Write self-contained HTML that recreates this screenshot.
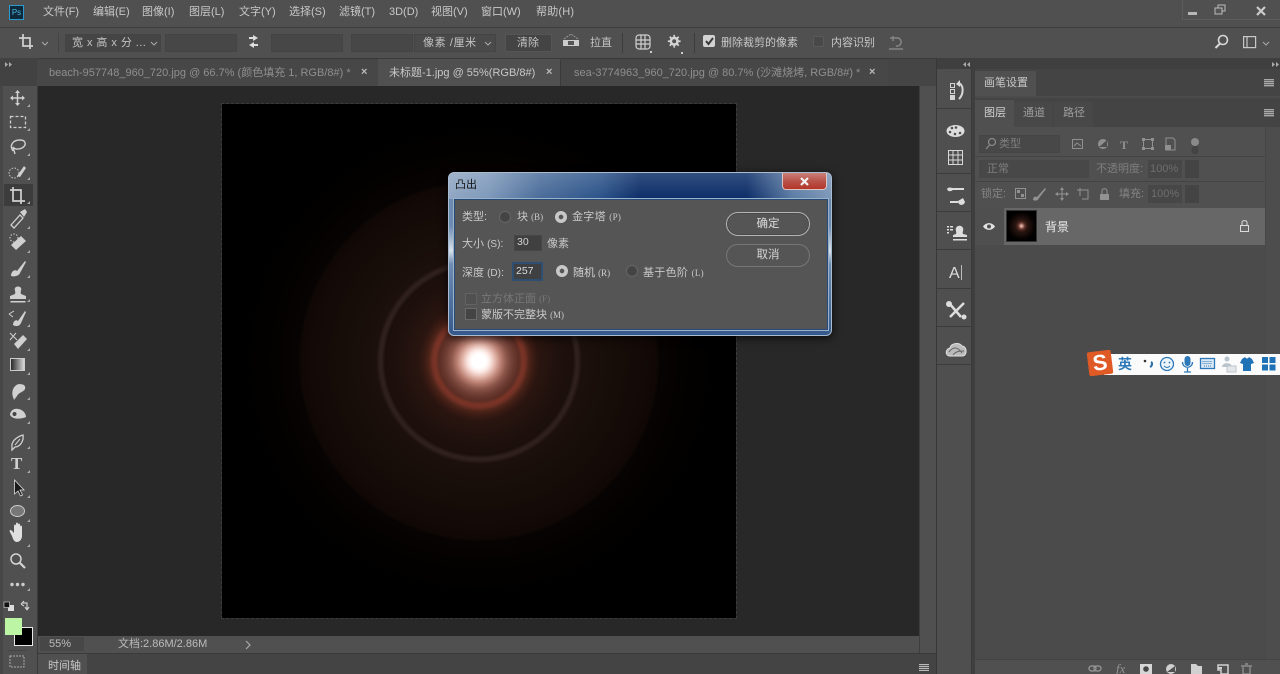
<!DOCTYPE html>
<html><head><meta charset="utf-8">
<style>
html,body{margin:0;padding:0;width:1280px;height:674px;overflow:hidden;background:#505050}
body{position:relative;font-family:"Liberation Sans","Noto Sans CJK SC",sans-serif;color:#c4c4c4;font-size:11px}
#w{position:absolute;left:0;top:0;width:1280px;height:674px;overflow:hidden;filter:blur(.35px)}
.a{position:absolute;white-space:nowrap}
.f{position:absolute;background:#474747;border:1px solid #444;box-sizing:border-box}
svg{position:absolute;overflow:visible}
.m{top:5px;font-size:11px;color:#c8c8c8;line-height:14px}
.t{top:66px;line-height:14px;font-size:11px;color:#8f8f8f}
.x{top:65px;font-size:11px;font-weight:bold;color:#bbb;line-height:14px}
.d{font-size:11px;color:#c9c9c9;line-height:14px}
.s{font-size:9px;font-family:"Liberation Serif",serif}
.rd{position:absolute;width:12px;height:12px;border-radius:50%;box-sizing:border-box}
.on{background:radial-gradient(circle,#555 0 2px,#c8c8c8 2.6px)}
.off{background:#444;border:1px solid #666}
.sep{position:absolute;background:#3c3c3c}
</style></head><body><div id="w">

<!-- menu -->
<div class="a" style="left:0;top:0;width:1280px;height:27px;background:#505050;border-bottom:1px solid #3e3e3e"></div>
<div class="a" style="left:9px;top:5px;width:13px;height:13px;background:#0e2a3a;border:1px solid #2c9ad0;color:#4db8e8;font-size:8px;line-height:13px;text-align:center">Ps</div>
<div class="a m" style="left:43px">文件(F)</div>
<div class="a m" style="left:93px">编辑(E)</div>
<div class="a m" style="left:142px">图像(I)</div>
<div class="a m" style="left:189px">图层(L)</div>
<div class="a m" style="left:239px">文字(Y)</div>
<div class="a m" style="left:289px">选择(S)</div>
<div class="a m" style="left:339px">滤镜(T)</div>
<div class="a m" style="left:389px">3D(D)</div>
<div class="a m" style="left:431px">视图(V)</div>
<div class="a m" style="left:481px">窗口(W)</div>
<div class="a m" style="left:536px;letter-spacing:.2px">帮助(H)</div>
<div class="a" style="left:1182px;top:0;width:98px;height:20px;border:1px solid #5c5c5c;border-top:0;border-right:0;box-sizing:border-box"></div>
<div class="a" style="left:1188px;top:12px;width:9px;height:3px;background:#b8b8b8"></div>
<svg style="left:1214px;top:4px" width="14" height="12"><rect x="4" y="1" width="7" height="6" fill="none" stroke="#bbb"/><rect x="1" y="4" width="7" height="6" fill="#555" stroke="#bbb"/></svg>
<svg style="left:1256px;top:6px" width="11" height="10"><path d="M1 1L9 9M9 1L1 9" stroke="#ccc" stroke-width="2.200"/></svg>

<!-- options -->
<div class="a" style="left:0;top:28px;width:1280px;height:30px;background:#505050;border-bottom:1px solid #3c3c3c"></div>
<svg style="left:18px;top:34px" width="20" height="18" fill="none" stroke="#d0d0d0" stroke-width="1.700"><path d="M5 0V12H15M1 4H12V15"/></svg>
<svg style="left:41px;top:41px" width="9" height="6" fill="none" stroke="#aaa"><path d="M1 1L4 4L7 1"/></svg>
<div class="sep" style="left:58px;top:33px;width:1px;height:20px;background:#444"></div>
<div class="f" style="left:65px;top:34px;width:96px;height:18px;background:#454545"></div>
<div class="a" style="left:72px;top:36px;font-size:11px;line-height:14px;color:#c4c4c4;letter-spacing:.45px">宽 x 高 x 分 ...</div>
<svg style="left:150px;top:41px" width="9" height="6" fill="none" stroke="#aaa"><path d="M1 1L4 4L7 1"/></svg>
<div class="f" style="left:165px;top:34px;width:72px;height:18px"></div>
<svg style="left:246px;top:35px" width="16" height="14" fill="#ddd"><path d="M7 0L12 3L7 6V4H3V2H7ZM8 7L3 10L8 13V11H12V9H8Z"/></svg>
<div class="f" style="left:271px;top:34px;width:72px;height:18px"></div>
<div class="f" style="left:351px;top:34px;width:62px;height:18px"></div>
<div class="f" style="left:414px;top:34px;width:82px;height:18px;background:#4a4a4a"></div>
<div class="a" style="left:423px;top:36px;font-size:11px;line-height:14px;color:#c4c4c4;letter-spacing:.6px">像素 /厘米</div>
<svg style="left:484px;top:41px" width="9" height="6" fill="none" stroke="#aaa"><path d="M1 1L4 4L7 1"/></svg>
<div class="f" style="left:505px;top:34px;width:47px;height:18px;background:#444;border-color:#555"></div>
<div class="a" style="left:517px;top:36px;font-size:11px;line-height:14px;color:#c4c4c4">清除</div>
<svg style="left:562px;top:33px" width="18" height="15"><path d="M2 6L9 1L16 6" fill="none" stroke="#999" stroke-dasharray="2 1"/><rect x="1" y="7" width="16" height="6" fill="#ccc"/><rect x="6" y="8" width="6" height="4" fill="#555"/></svg>
<div class="a" style="left:590px;top:36px;font-size:11px;line-height:14px;color:#c4c4c4">拉直</div>
<div class="sep" style="left:622px;top:33px;width:1px;height:20px"></div>
<svg style="left:635px;top:34px" width="18" height="19" fill="none" stroke="#d0d0d0" stroke-width="1.200"><rect x="1" y="1" width="14" height="14" rx="3"/><path d="M1 6H15M1 10H15M6 1V15M10 1V15"/><rect x="15" y="17" width="2" height="2" fill="#ccc" stroke="none"/></svg>
<svg style="left:667px;top:34px" width="18" height="20"><path d="M7.500 1H9.500V3.200L11.500 4L13 2.500L14.500 4L13 5.500L13.800 7.500H16V9.500H13.800L13 11.500L14.500 13L13 14.500L11.500 13L9.500 13.800V16H7.500V13.800L5.500 13L4 14.500L2.500 13L4 11.500L3.200 9.500H1V7.500H3.200L4 5.500L2.500 4L4 2.500L5.500 4L7.500 3.200Z" transform="scale(.85)" fill="#d4d4d4"/><circle cx="7.200" cy="7.200" r="2" fill="#505050"/><rect x="14" y="18" width="2" height="2" fill="#ccc"/></svg>
<div class="sep" style="left:694px;top:33px;width:1px;height:20px"></div>
<div class="a" style="left:703px;top:35px;width:12px;height:12px;background:#d2d2d2;border-radius:2px"></div>
<svg style="left:704px;top:36px" width="11" height="10" fill="none" stroke="#3a3a3a" stroke-width="2"><path d="M2 5L4.500 8L9 2"/></svg>
<div class="a" style="left:721px;top:36px;font-size:11px;line-height:14px;color:#c8c8c8">删除裁剪的像素</div>
<div class="a" style="left:813px;top:36px;width:11px;height:11px;background:#484848;border:1px solid #5a5a5a;box-sizing:border-box;border-radius:2px"></div>
<div class="a" style="left:831px;top:36px;font-size:11px;line-height:14px;color:#c8c8c8">内容识别</div>
<svg style="left:888px;top:35px" width="17" height="15" fill="none" stroke="#858585" stroke-width="1.500"><path d="M5 3H10A4 4 0 1 1 8 11M5 1V6M5 3L2 3M1 14H15"/></svg>
<svg style="left:1214px;top:34px" width="16" height="16" fill="none" stroke="#d8d8d8" stroke-width="1.600"><circle cx="9" cy="6" r="4.500"/><path d="M6 9.500L1.500 14" stroke-width="2"/></svg>
<svg style="left:1243px;top:36px" width="14" height="13" fill="none" stroke="#c8c8c8" stroke-width="1.200"><rect x=".6" y=".6" width="12" height="11"/><path d="M4 1V12"/></svg>
<svg style="left:1262px;top:41px" width="9" height="6" fill="none" stroke="#aaa"><path d="M1 1L4 4L7 1"/></svg>

<!-- tab bar -->
<div class="a" style="left:0;top:58px;width:937px;height:28px;background:#454545;border-top:1px solid #3a3a3a;box-sizing:border-box"></div>
<div class="a" style="left:0;top:58px;width:38px;height:28px;background:#424242"></div>
<svg style="left:5px;top:61px" width="10" height="8" fill="#aaa"><path d="M0 1V6L3 3.500ZM4 1V6L7 3.500Z"/></svg>
<div class="a" style="left:37px;top:60px;width:341px;height:26px;background:#474747;border-right:1px solid #3a3a3a"></div>
<div class="a" style="left:378px;top:59px;width:182px;height:27px;background:#505050"></div>
<div class="a" style="left:560px;top:60px;width:327px;height:26px;background:#474747;border-left:1px solid #3a3a3a"></div>
<div class="a t" style="left:49px">beach-957748_960_720.jpg @ 66.7% (颜色填充 1, RGB/8#) *</div>
<div class="a x" style="left:361px">×</div>
<div class="a t" style="left:389px;color:#c8c8c8">未标题-1.jpg @ 55%(RGB/8#)</div>
<div class="a x" style="left:546px">×</div>
<div class="a t" style="left:574px">sea-3774963_960_720.jpg @ 80.7% (沙滩烧烤, RGB/8#) *</div>
<div class="a x" style="left:869px">×</div>

<!-- canvas -->
<div class="a" style="left:38px;top:86px;width:881px;height:550px;background:#282828"></div>
<div class="a" style="left:222px;top:104px;width:514px;height:514px;background:#000;overflow:hidden;outline:1px dashed #3c3c3c">
<div class="a" style="left:0;top:0;width:514px;height:514px;background:
radial-gradient(circle at 257px 257px,#fff 0,#fff 7px,#fbeae6 11px,#e5b9ae 16px,#b97f72 22px,#8a5449 28px,#6d3c32 34px,#5b2d24 40px,#7c3426 44px,#6e3024 47px,#4e2419 50px,#3c1c14 54px,#2a1510 60px,#1f110d 80px,#1b0f0c 94px,#2d1f1b 97px,#30211d 99px,#1c100c 103px,#170d09 130px,#130a07 165px,#100805 177px,#070302 181px,#020100 215px,#000 250px)"></div>
</div>

<!-- left toolbar -->
<div class="a" style="left:0;top:86px;width:37px;height:588px;background:#505050;border-right:1px solid #3a3a3a"></div>
<div class="a" style="left:0;top:86px;width:3px;height:588px;background:#464646"></div>
<div class="a" style="left:4px;top:184px;width:29px;height:22px;background:#3c3c3c"></div>
<svg style="left:0;top:86px" width="37" height="590">
<defs><linearGradient id="g"><stop offset="0" stop-color="#222"/><stop offset="1" stop-color="#ddd"/></linearGradient></defs>
<g fill="#d0d0d0" stroke="#d0d0d0">
<path d="M17.500 5V19M11 12H24" stroke-width="1.500" fill="none"/><path d="M17.500 4L15 7H20ZM17.500 20L15 17H20ZM10 12L13 9.500V14.500ZM25 12L22 9.500V14.500Z" stroke="none"/>
<rect x="10.500" y="30.500" width="15" height="11" fill="none" stroke-dasharray="3 2" stroke-width="1.300"/>
<path d="M13 65C9 59 13 54 20 54C26 54 27 59 22 62C18 64 14 63 13 61" fill="none" stroke-width="1.400"/><path d="M13 61L15 68" fill="none" stroke-width="1.400"/>
<circle cx="14" cy="87" r="5" fill="none" stroke-dasharray="1.500 1.500"/><path d="M17 90L24 80L26 82L20 91Z" stroke="none"/>
<path d="M13 101V115H25M10 104H21V118" fill="none" stroke-width="1.700"/>
<path d="M11 139L20 129L23 132L14 142Z" fill="none" stroke-width="1.300"/><path d="M20 126L25 123L27 126L24 131Z" stroke="none"/>
<path d="M11 159L21 150L26 155L16 164Z" stroke="none"/><circle cx="14" cy="152" r="4" fill="none" stroke-dasharray="1.500 1.500"/>
<path d="M11 190C11 185 15 183 17 185L25 175L26 176L20 187C19 190 14 191 11 190Z" stroke="none"/>
<path d="M10 213V210L15 208C16 205 14 204 15 202C16 200 20 200 21 202C22 204 20 205 21 208L26 210V213Z" stroke="none"/><rect x="10.500" y="215" width="15" height="1.500" stroke="none"/>
<path d="M13 239C13 235 16 233 18 235L25 225L26 226L21 237C20 240 16 241 13 239Z" stroke="none"/><path d="M9 228L14 225M9 228L13 231" fill="none"/>
<path d="M14 258L23 249L27 253L18 263Z" stroke="none"/><path d="M10 247L17 254M16 247L10 254" fill="none"/>
</g>
<rect x="10.500" y="272.500" width="14" height="12" fill="url(#g)" stroke="#ccc"/>
<g fill="#d0d0d0" stroke="#d0d0d0">
<path d="M13 311C11 305 14 299 19 298C24 298 26 300 25 303C24 306 19 306 17 310L14 314Z" stroke="none"/>
<path d="M10 329C10 325 14 322 18 323C22 323 26 327 26 331C22 333 13 334 10 329Z" stroke="none"/><circle cx="14.500" cy="328" r="2" fill="#444" stroke="none"/>
<path d="M12 361C11 356 16 351 23 349C24 355 20 361 15 361L12 364Z" fill="none" stroke-width="1.300"/><path d="M15 359L20 353" fill="none"/>
<text x="11" y="383" font-family="Liberation Serif" font-size="17" font-weight="bold" stroke="none">T</text>
</g>
<path d="M14.500 394V408L18 405L20.500 410L22.500 409L20 404H24Z" fill="#1a1a1a" stroke="#ddd" stroke-width=".8"/>
<ellipse cx="17.500" cy="425" rx="7" ry="5.500" fill="#777" stroke="#ccc"/>
<path d="M12 450C10 446 9 445 10 444C12 444 13 446 14 447V440C14 438 16 438 16 440V443V438C16 436 18 436 18 438V443V439C18 437 20 437 20 439V444V441C20 439 22 439 22 441V450C22 454 19 456 17 456C14 456 13 453 12 450Z" fill="#e0e0e0"/>
<circle cx="16" cy="473" r="5" fill="none" stroke="#d4d4d4" stroke-width="1.500"/><path d="M20 477L25 482" stroke="#d4d4d4" stroke-width="2.200"/>
<g fill="#ccc"><circle cx="12" cy="498.500" r="1.700"/><circle cx="17.500" cy="498.500" r="1.700"/><circle cx="23" cy="498.500" r="1.700"/></g>
<g fill="#aaa"><path d="M30 21V18L27 21ZM30 45V42L27 45ZM30 70V67L27 70ZM30 94V91L27 94ZM30 118V115L27 118ZM30 143V140L27 143ZM30 167V164L27 167ZM30 192V189L27 192ZM30 216V213L27 216ZM30 241V238L27 241ZM30 265V262L27 265ZM30 289V286L27 289ZM30 314V311L27 314ZM30 338V335L27 338ZM30 363V360L27 363ZM30 387V384L27 387ZM30 412V409L27 412ZM30 436V433L27 436ZM30 461V458L27 461ZM30 505V502L27 505Z"/></g>
<rect x="8" y="519" width="6" height="6" fill="#ddd"/><rect x="4" y="516" width="5.500" height="5.500" fill="#111" stroke="#ddd" stroke-width=".6"/>
<path d="M22 517H27V523M21 518L24 515M21 518L24 520M27 524L25 521M27 524L29 521" fill="none" stroke="#ccc" stroke-width="1.200"/>
<rect x="10" y="570" width="14" height="11" fill="none" stroke="#aaa" stroke-dasharray="2 1"/>
<rect x="8" y="564" width="18" height="1" fill="#444"/>
</svg>
<div class="a" style="left:14px;top:627px;width:17px;height:17px;background:#000;border:1px solid #e8e8e8"></div>
<div class="a" style="left:5px;top:618px;width:17px;height:17px;background:#bcf5a3"></div>

<!-- status -->
<div class="a" style="left:38px;top:636px;width:882px;height:16px;background:#505050"></div>
<div class="a" style="left:40px;top:637px;width:44px;height:14px;background:#474747"></div>
<div class="a" style="left:49px;top:637px;font-size:11px;line-height:14px;color:#bcbcbc">55%</div>
<div class="a" style="left:118px;top:637px;font-size:11px;line-height:14px;color:#bcbcbc">文档:2.86M/2.86M</div>
<svg style="left:245px;top:640px" width="7" height="10" fill="none" stroke="#aaa" stroke-width="1.200"><path d="M1 1L5 5L1 9"/></svg>
<!-- timeline -->
<div class="a" style="left:38px;top:653px;width:899px;height:21px;background:#444;border-top:1px solid #3a3a3a;box-sizing:border-box"></div>
<div class="a" style="left:38px;top:654px;width:49px;height:20px;background:#505050"></div>
<div class="a" style="left:48px;top:659px;font-size:11px;line-height:14px;color:#c8c8c8">时间轴</div>
<div class="a" style="left:919px;top:664px;width:10px;height:7px;background:repeating-linear-gradient(#bbb 0 1px,#555 1px 2px)"></div>
<!-- right scroll column -->
<div class="a" style="left:919px;top:86px;width:18px;height:567px;background:#505050;border-left:1px solid #3e3e3e;box-sizing:border-box"></div>
<div class="a" style="left:936px;top:58px;width:1px;height:616px;background:#383838"></div>

<!-- dock column -->
<div class="a" style="left:937px;top:58px;width:343px;height:616px;background:#4b4b4b"></div>
<div class="a" style="left:937px;top:58px;width:343px;height:11px;background:#3f3f3f"></div>
<svg style="left:900px;top:60px" width="380" height="10" fill="#aaa"><path d="M66 2V7L63 4.500ZM70 2V7L67 4.500Z"/><path d="M372 2V7L375 4.500ZM376 2V7L379 4.500Z"/></svg>
<div class="a" style="left:937px;top:69px;width:35px;height:605px;background:#4f4f4f;border-right:1px solid #3a3a3a;box-sizing:border-box"></div>
<div class="a" style="left:972px;top:69px;width:3px;height:605px;background:#3f3f3f"></div>
<div class="sep" style="left:937px;top:108px;width:35px;height:1px"></div>
<div class="sep" style="left:937px;top:173px;width:35px;height:1px"></div>
<div class="sep" style="left:937px;top:211px;width:35px;height:1px"></div>
<div class="sep" style="left:937px;top:249px;width:35px;height:1px"></div>
<div class="sep" style="left:937px;top:288px;width:35px;height:1px"></div>
<div class="sep" style="left:937px;top:326px;width:35px;height:1px"></div>
<div class="sep" style="left:937px;top:364px;width:35px;height:1px"></div>
<svg style="left:937px;top:69px" width="35" height="300">
<g fill="none" stroke="#d4d4d4"><rect x="13.500" y="14.500" width="4" height="4"/><rect x="13.500" y="20.500" width="4" height="4"/></g>
<rect x="13" y="26" width="5" height="5" fill="#d4d4d4"/>
<path d="M21 14C27 15 27 25 22 30" fill="none" stroke="#d8d8d8" stroke-width="2"/><path d="M19 15L23 11V18Z" fill="#d8d8d8"/>
<ellipse cx="18.500" cy="62" rx="9" ry="6" fill="#ddd"/><g fill="#4f4f4f"><circle cx="15" cy="59" r="1.300"/><circle cx="19" cy="58.500" r="1.300"/><circle cx="13" cy="63" r="1.300"/><circle cx="18" cy="65" r="1.300"/><circle cx="23" cy="64" r="1.300"/></g>
<g fill="none" stroke="#d8d8d8"><rect x="11.500" y="81.500" width="14" height="14"/><path d="M16 82V95M21 82V95M12 86H25M12 91H25"/></g>
<path d="M15 120H27M13 133H21" stroke="#ddd" stroke-width="2"/><path d="M10 120C11 118 14 118 17 120C14 123 11 123 10 120ZM26 129L21 132C21 137 27 137 28 133Z" fill="#ddd"/>
<g fill="#ddd"><rect x="10" y="157" width="2" height="1.500"/><rect x="10" y="160" width="2" height="1.500"/><rect x="10" y="163" width="2" height="1.500"/><rect x="13" y="157" width="3" height="1.500"/><rect x="13" y="160" width="3" height="1.500"/><path d="M18 168V166L21 165C22 163 20 161 21 159C22 156 27 156 28 159C29 161 27 163 28 165L32 166V168Z" transform="translate(-2,0)"/><rect x="16" y="170" width="14" height="1.500"/></g>
<text x="12" y="209" font-family="Liberation Sans" font-size="16" fill="#ddd">A</text><rect x="24" y="196" width="1" height="15" fill="#bbb"/>
<path d="M12 234L24 248M27 234L13 248" stroke="#ddd" stroke-width="2.500"/><circle cx="12" cy="235" r="3" fill="#ddd"/><circle cx="27" cy="248" r="2.500" fill="#ddd"/>
<path d="M13 287C8 287 8 280 13 279C14 274 22 273 25 277C30 277 31 287 25 287Z" fill="#bbb" stroke="#e0e0e0"/><path d="M12 283C16 277 21 278 25 284M16 286C19 282 23 282 27 282" stroke="#666" fill="none"/>
</svg>

<!-- brush settings -->
<div class="a" style="left:975px;top:69px;width:305px;height:27px;background:#444"></div>
<div class="a" style="left:975px;top:71px;width:61px;height:25px;background:#505050"></div>
<div class="a" style="left:984px;top:76px;font-size:11px;line-height:14px;color:#c8c8c8">画笔设置</div>
<div class="a" style="left:1264px;top:79px;width:10px;height:8px;background:repeating-linear-gradient(#a8a8a8 0 1px,#6a6a6a 1px 2px)"></div>
<!-- tabs -->
<div class="a" style="left:975px;top:98px;width:305px;height:29px;background:#444"></div>
<div class="a" style="left:975px;top:100px;width:39px;height:27px;background:#505050"></div>
<div class="a" style="left:1014px;top:102px;width:39px;height:25px;background:#484848"></div>
<div class="a" style="left:1054px;top:102px;width:39px;height:25px;background:#484848"></div>
<div class="a" style="left:984px;top:106px;font-size:11px;line-height:14px;color:#d0d0d0">图层</div>
<div class="a" style="left:1023px;top:106px;font-size:11px;line-height:14px;color:#9d9d9d">通道</div>
<div class="a" style="left:1063px;top:106px;font-size:11px;line-height:14px;color:#9d9d9d">路径</div>
<div class="a" style="left:1264px;top:109px;width:10px;height:8px;background:repeating-linear-gradient(#a8a8a8 0 1px,#6a6a6a 1px 2px)"></div>

<!-- filter rows -->
<div class="a" style="left:975px;top:127px;width:305px;height:81px;background:#505050"></div>
<div class="a" style="left:975px;top:156px;width:290px;height:1px;background:#444"></div>
<div class="a" style="left:975px;top:181px;width:290px;height:1px;background:#444"></div>
<div class="a" style="left:979px;top:135px;width:81px;height:18px;background:#484848;border:1px solid #454545;box-sizing:border-box"></div>
<svg style="left:985px;top:137px" width="12" height="13" fill="none" stroke="#888" stroke-width="1.300"><circle cx="7" cy="5" r="3.500"/><path d="M4.500 8L1 12"/></svg>
<div class="a" style="left:999px;top:137px;font-size:11px;line-height:14px;color:#7e7e7e">类型</div>
<svg style="left:1072px;top:136px" width="132" height="18">
<g fill="none" stroke="#909090"><rect x=".5" y="3.500" width="10" height="9"/></g><path d="M2 10L5 7L9 10" stroke="#909090" fill="none"/>
<circle cx="31" cy="8" r="5" fill="#909090"/><path d="M27 11L35 4V11Z" fill="#505050"/>
<text x="48" y="13" font-family="Liberation Serif" font-weight="bold" font-size="12" fill="#909090">T</text>
<rect x="71.500" y="3.500" width="9" height="9" fill="none" stroke="#909090"/><g fill="#909090"><rect x="70" y="2" width="3" height="3"/><rect x="79" y="2" width="3" height="3"/><rect x="70" y="11" width="3" height="3"/><rect x="79" y="11" width="3" height="3"/></g>
<path d="M94 8V2H101L103 4V14H94Z" fill="none" stroke="#909090"/><rect x="93" y="9" width="6" height="5" fill="#909090"/>
<circle cx="123" cy="6" r="4" fill="#8a8a8a"/><rect x="119.500" y="10" width="7" height="8" rx="3" fill="#444"/>
</svg>
<div class="a" style="left:979px;top:160px;width:110px;height:18px;background:#484848"></div>
<div class="a" style="left:987px;top:162px;font-size:11px;line-height:14px;color:#7e7e7e">正常</div>
<div class="a" style="left:1096px;top:162px;font-size:11px;line-height:14px;color:#7e7e7e">不透明度:</div>
<div class="a" style="left:1148px;top:160px;width:34px;height:18px;background:#474747"></div>
<div class="a" style="left:1150px;top:162px;font-size:11px;line-height:14px;color:#6e6e6e">100%</div>
<div class="a" style="left:1185px;top:160px;width:14px;height:18px;background:#444"></div>
<div class="a" style="left:981px;top:187px;font-size:11px;line-height:14px;color:#858585">锁定:</div>
<svg style="left:1014px;top:186px" width="100" height="16" fill="#929292">
<rect x="1.500" y="2.500" width="10" height="10" fill="none" stroke="#929292"/><rect x="3" y="4" width="3" height="3"/><rect x="7" y="8" width="3" height="3"/>
<path d="M19 14C19 11 21 10 23 11L31 2L32 3L25 12C24 15 21 15 19 14Z"/>
<path d="M48 2V14M42 8H54" stroke="#929292" fill="none"/><path d="M48 1L46 4H50ZM48 15L46 12H50ZM41 8L44 6V10ZM55 8L52 6V10Z"/>
<path d="M64 4H74V13H68M66 2V10M63 4H68" fill="none" stroke="#929292"/>
<path d="M86 8H95V14H86Z"/><path d="M88 8V5C88 2 93 2 93 5V8" fill="none" stroke="#929292"/>
</svg>
<div class="a" style="left:1119px;top:187px;font-size:11px;line-height:14px;color:#858585">填充:</div>
<div class="a" style="left:1148px;top:185px;width:34px;height:18px;background:#474747"></div>
<div class="a" style="left:1151px;top:187px;font-size:11px;line-height:14px;color:#6e6e6e">100%</div>
<div class="a" style="left:1185px;top:185px;width:14px;height:18px;background:#444"></div>

<!-- layer -->
<div class="a" style="left:975px;top:208px;width:30px;height:37px;background:#4f4f4f"></div>
<div class="a" style="left:1004px;top:208px;width:261px;height:37px;background:#676767"></div>
<svg style="left:982px;top:221px" width="14" height="11"><path d="M1 5.500C4 1 10 1 13 5.500C10 10 4 10 1 5.500Z" fill="#e2e2e2"/><circle cx="7" cy="5.500" r="2" fill="#4f4f4f"/></svg>
<div class="a" style="left:1007px;top:211px;width:29px;height:30px;background:radial-gradient(circle at 14.500px 15px,#f4ded8 0,#b98377 1.500px,#5b2f27 3.500px,#2a1510 6px,#1a0e0b 9px,#090403 12px,#000 15px);outline:1px solid #333"></div>
<div class="a" style="left:1045px;top:220px;font-size:12px;line-height:15px;color:#ececec">背景</div>
<svg style="left:1239px;top:219px" width="12" height="14" fill="none" stroke="#dcdcdc"><rect x="1.500" y="6.500" width="8" height="6"/><path d="M3 6V3.500C3 1 8 1 8 3.500V6"/></svg>

<div class="a" style="left:1265px;top:127px;width:15px;height:547px;background:#4d4d4d;border-left:1px solid #474747;box-sizing:border-box"></div>

<!-- footer -->
<div class="a" style="left:975px;top:659px;width:305px;height:15px;background:#505050;border-top:1px solid #444;box-sizing:border-box"></div>
<svg style="left:1088px;top:662px" width="172" height="12">
<g fill="none" stroke="#9a9a9a" stroke-width="1.200"><rect x="1" y="4" width="7" height="5" rx="2.500"/><rect x="6" y="4" width="7" height="5" rx="2.500"/></g>
<text x="28" y="11" font-family="Liberation Serif" font-style="italic" font-size="13" fill="#929292">fx</text>
<rect x="52" y="2" width="12" height="10" fill="#d6d6d6"/><circle cx="58" cy="7" r="2.800" fill="#454545"/>
<circle cx="83" cy="7" r="5" fill="#d0d0d0"/><path d="M79 10L87 4V10Z" fill="#505050"/>
<path d="M103 2H108L110 4H114V12H103Z" fill="#d0d0d0"/>
<path d="M130 3H140V12H133V8H130Z" fill="none" stroke="#d0d0d0" stroke-width="1.500"/><rect x="130" y="5" width="4" height="2" fill="#d0d0d0"/>
<path d="M153 4H164M155 5V12H162V5M157 2H160" fill="none" stroke="#999" stroke-width="1.200"/>
</svg>

<!-- Sogou IME -->
<div class="a" style="left:1104px;top:354px;width:176px;height:21px;background:#fbfbfb"></div>
<div class="a" style="left:1088px;top:351px;width:24px;height:24px;background:#df5a25;transform:rotate(-7deg);border-radius:2px;color:#fff;font:bold 22px/24px 'Liberation Sans',sans-serif;text-align:center">S</div>
<div class="a" style="left:1118px;top:356px;font-size:14px;line-height:17px;font-weight:bold;color:#2c78b8">英</div>
<svg style="left:1142px;top:356px" width="138" height="18">
<circle cx="3" cy="5" r="1.300" fill="#333"/><path d="M9 6C11 7 10 10 8 11" stroke="#2b6da8" stroke-width="2" fill="none"/>
<circle cx="25" cy="8" r="6.500" fill="#eef5fb" stroke="#2c78b8" stroke-width="1.300"/><circle cx="22.500" cy="6.500" r=".9" fill="#2c78b8"/><circle cx="27.500" cy="6.500" r=".9" fill="#2c78b8"/><path d="M22 10C24 12 26 12 28 10" stroke="#2c78b8" fill="none"/>
<rect x="42.500" y="0" width="6" height="10" rx="3" fill="#2c78b8"/><path d="M40.500 6C40.500 13 50.500 13 50.500 6M45.500 12V16M42 16H49" stroke="#2c78b8" stroke-width="1.300" fill="none"/>
<rect x="58.500" y="2.500" width="14" height="10" fill="#dbe9f5" stroke="#2c78b8" stroke-width="1.300"/><path d="M60.500 5.500H70.500M60.500 7.500H70.500M62 10H69" stroke="#2c78b8" stroke-dasharray="1 1"/>
<circle cx="85" cy="3" r="2.500" fill="#b8c2cb"/><path d="M80 11C80 6 90 6 90 11Z" fill="#b8c2cb"/><rect x="85" y="10" width="9" height="6" fill="#e3e7ea" stroke="#bcc5cc"/>
<path d="M100 3L103 1C104 3 106 3 107 1L110 3L112 7L109 8V15H101V8L98 7Z" fill="#1f72b5"/>
<rect x="120" y="1" width="6" height="6" fill="#1f72b5"/><rect x="127.500" y="1" width="6" height="6" fill="#1f72b5"/><rect x="120" y="8.500" width="6" height="6" fill="#1f72b5"/><rect x="127.500" y="8.500" width="6" height="6" fill="#1f72b5"/>
</svg>

<!-- dialog -->
<div class="a" style="left:448px;top:172px;width:384px;height:164px;border-radius:6px;box-shadow:0 2px 9px rgba(0,0,0,.75);border:1px solid #a9bcd0;box-sizing:border-box;background:linear-gradient(90deg,#8fa6c2 0,#7e99ba 10%,#4a6c9a 24%,#2a5288 40%,#0c2d68 50%,#0c2d68 78%,#5c7ca5 90%,#7c97b8 100%)"></div>
<div class="a" style="left:449px;top:173px;width:382px;height:26px;border-radius:5px 5px 0 0;background:linear-gradient(rgba(255,255,255,.16),rgba(255,255,255,0))"></div>
<div class="a" style="left:449px;top:199px;width:382px;height:136px;border-radius:0 0 5px 5px;background:linear-gradient(#6b89ad,#6d8cb2 20%,#d8e2ec 38%,#6d8cb2 48%,#35598c)"></div>
<div class="a" style="left:454px;top:199px;width:374px;height:131px;background:#555;border:1px solid #244b7c;box-sizing:border-box;box-shadow:0 0 0 1px #9cb0c6"></div>
<div class="a" style="left:455px;top:178px;font-size:11px;line-height:14px;color:#111">凸出</div>
<div class="a" style="left:782px;top:173px;width:45px;height:17px;border-radius:0 0 4px 4px;border:1px solid #d9c7c4;border-top:0;box-sizing:border-box;background:linear-gradient(#c9807a,#b8544a 50%,#b5352a)"></div>
<svg style="left:799px;top:177px" width="12" height="10"><path d="M2 1L9 8M9 1L2 8" stroke="#f2f2f2" stroke-width="2.200"/></svg>

<div class="a d" style="left:462px;top:210px">类型:</div>
<div class="rd off" style="left:499px;top:211px"></div>
<div class="a d" style="left:517px;top:210px">块 <span class="s">(B)</span></div>
<div class="rd on" style="left:555px;top:211px"></div>
<div class="a d" style="left:572px;top:210px;letter-spacing:.3px">金字塔 <span class="s">(P)</span></div>

<div class="a d" style="left:462px;top:237px">大小 <span style="font-size:10px">(S)</span>:</div>
<div class="a" style="left:513px;top:234px;width:30px;height:18px;background:#404040;border:1px solid #555;box-sizing:border-box;box-shadow:inset 0 0 0 1px #474747;color:#d2d2d2;font-size:10.500px;line-height:15px;padding-left:3px">30</div>
<div class="a d" style="left:547px;top:237px">像素</div>

<div class="a d" style="left:462px;top:266px">深度 <span style="font-size:10px">(D)</span>:</div>
<div class="a" style="left:512px;top:262px;width:31px;height:19px;background:#3f4042;border:2px solid #2f4f72;box-sizing:border-box;color:#dcdcdc;font-size:10.500px;line-height:14px;padding-left:2px">257</div>
<div class="rd on" style="left:556px;top:265px"></div>
<div class="a d" style="left:573px;top:266px;color:#d0d0d0">随机 <span class="s">(R)</span></div>
<div class="rd off" style="left:626px;top:265px"></div>
<div class="a d" style="left:643px;top:266px;letter-spacing:.3px">基于色阶 <span class="s">(L)</span></div>

<div class="a" style="left:465px;top:293px;width:12px;height:12px;background:#505050;border:1px solid #626262;box-sizing:border-box"></div>
<div class="a d" style="left:481px;top:292px;color:#787878">立方体正面 <span class="s">(F)</span></div>
<div class="a" style="left:465px;top:308px;width:12px;height:12px;background:#444;border:1px solid #6a6a6a;box-sizing:border-box"></div>
<div class="a d" style="left:481px;top:308px">蒙版不完整块 <span class="s">(M)</span></div>

<div class="a" style="left:726px;top:212px;width:84px;height:24px;border:1px solid #b4b4b4;border-radius:12px;box-sizing:border-box;text-align:center;line-height:22px;color:#dcdcdc;font-size:11.500px;box-shadow:inset 0 0 0 1px #4a4a4a">确定</div>
<div class="a" style="left:726px;top:244px;width:84px;height:23px;border:1px solid #777;border-radius:12px;box-sizing:border-box;text-align:center;line-height:21px;color:#d4d4d4;font-size:11.500px">取消</div>

</div></body></html>
